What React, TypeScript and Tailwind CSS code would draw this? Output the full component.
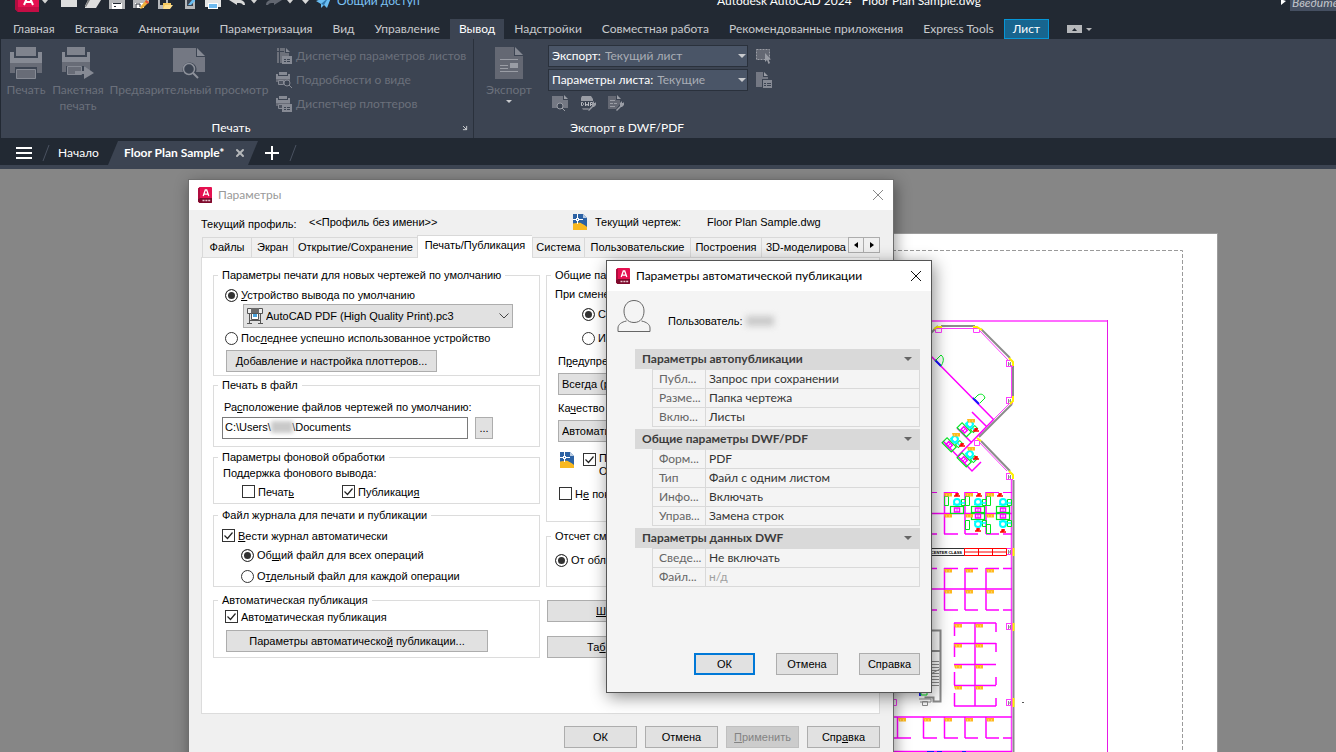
import { useState } from 'react';
import type { ReactNode } from 'react';
import { ArrowDownRight, X } from 'lucide-react';
import clsx from 'clsx';

const ribbonTabs = [
  'Главная', 'Вставка', 'Аннотации', 'Параметризация', 'Вид', 'Управление', 'Вывод', 'Надстройки',
  'Совместная работа', 'Рекомендованные приложения', 'Express Tools',
];

const publishSections = [
  {
    title: 'Параметры автопубликации',
    rows: [
      ['Публ...', 'Запрос при сохранении'],
      ['Разме...', 'Папка чертежа'],
      ['Вклю...', 'Листы'],
    ],
  },
  {
    title: 'Общие параметры DWF/PDF',
    rows: [
      ['Форм...', 'PDF'],
      ['Тип', 'Файл с одним листом'],
      ['Инфо...', 'Включать'],
      ['Управ...', 'Замена строк'],
    ],
  },
  {
    title: 'Параметры данных DWF',
    rows: [
      ['Сведе...', 'Не включать'],
      ['Файл...', 'н/д'],
    ],
  },
];

/* ---------- icons ---------- */

function AcadLogo({ className }: { className?: string }) {
  return (
    <svg viewBox="0 0 14 16" className={className} aria-hidden="true">
      <path d="M0 1.5 2 0h11a1 1 0 0 1 1 1v14a1 1 0 0 1-1 1H1.5L0 14.5z" fill="#e51050" />
      <path d="M0 1.5 2 0v11L0 12z" fill="#b00d3f" />
      <path d="M0 12 2 11h12v4a1 1 0 0 1-1 1H1.5L0 14.5z" fill="#7d0a2c" />
      <path d="M5.2 9 7.3 3h1.4l2.1 6M6 7.2h4" stroke="#fff" strokeWidth="1.3" fill="none" />
      <path d="M4.5 13.5h2M7.4 13.5h2M10.2 13.5h2" stroke="#e8c7d1" strokeWidth="1.4" />
    </svg>
  );
}

function DrawingIcon({ className }: { className?: string }) {
  return (
    <svg viewBox="0 0 14 16" className={className} aria-hidden="true">
      <path d="M0 0h10l4 4v12H0z" fill="#2c62a4" />
      <path d="M10 0v4h4z" fill="#b9cbe2" />
      <path d="M0 9.500c4-.5 6-1 8-.5l6 3.500V16H0z" fill="#f8b820" />
      <path d="M8 9c3 1 5 2.500 6 4V8L7 6z" fill="#2c62a4" />
      <path d="M4.500 0v10M0 5.500h10" stroke="#fff" strokeWidth="1" />
      <rect x="3.500" y="4.500" width="2" height="2" fill="#2c62a4" stroke="#fff" strokeWidth="1" />
    </svg>
  );
}

function PrinterIcon() {
  return (
    <svg viewBox="0 0 32 32" className="size-8" aria-hidden="true">
      <path d="M6 0h20v9H6z" fill="#7f838d" />
      <path d="M0 5h4v6h24V5h4v11H0z" fill="#868a94" />
      <path d="M0 16h32v10h-5v-6H5v6H0z" fill="#686c77" />
      <path d="M6.500 22.500h19v9h-19z" fill="#686c77" stroke="#868a94" />
    </svg>
  );
}

function BatchPrinterIcon() {
  return (
    <svg viewBox="0 0 32 32" className="size-8" aria-hidden="true">
      <path d="M5 0h18v8H5z" fill="#7f838d" />
      <path d="M0 5h3v5h22V5h3v10H0z" fill="#868a94" />
      <path d="M0 15h28v8h-5v-4H4v6H0z" fill="#686c77" />
      <path d="M5.500 19.500h14v8h-14z" fill="#686c77" stroke="#868a94" />
      <path d="M13 24h9v-5l10 7-10 6v-5h-9z" fill="#868a94" />
    </svg>
  );
}

function PreviewIcon() {
  return (
    <svg viewBox="0 0 32 32" className="size-8" aria-hidden="true">
      <path d="M0 1h23v9h9v15h-9a7 7 0 1 0-13 0H0z" fill="#747883" />
      <path d="M24 1v8h8z" fill="#868a94" />
      <circle cx="16" cy="22" r="5.500" fill="none" stroke="#8d919a" strokeWidth="1.500" />
      <path d="m20 26 5 5" stroke="#8d919a" strokeWidth="2" />
    </svg>
  );
}

function ExportIcon() {
  return (
    <svg viewBox="0 0 28 32" className="h-8 w-7" aria-hidden="true">
      <path d="M0 0h19v9h9v23H0z" fill="#646873" />
      <path d="M20 0v8h8z" fill="#868a94" />
      <path d="M5 12.500h18M5 18.500h8M5 24.500h18M5 21.500h8" stroke="#9a9da5" />
      <path d="M15 16h8v5h-8z" fill="#9a9da5" />
    </svg>
  );
}

function PageSetupIcon() {
  return (
    <svg viewBox="0 0 16 16" className="size-4" aria-hidden="true">
      <path d="M1 0h8v5h4v3H6v7H1z" fill="#6d717b" />
      <path d="M10 0v4h4z" fill="#868a94" />
      <path d="M0 3.500h8M3.500 0v15" stroke="#3c4452" />
      <path d="M6 8h10v8H6z" fill="#868a94" />
      <path d="M8 11.500h2M8 13.500h2M11 11.500h3M11 13.500h3" stroke="#3c4452" />
    </svg>
  );
}

function SmallPrinter({ variant }: { variant: 'search' | 'list' }) {
  return (
    <svg viewBox="0 0 16 16" className="size-4" aria-hidden="true">
      <path d="M3 0h8v3H3z" fill="#868a94" />
      <path d="M0 2h2v2h10V2h2v5H0z" fill="#868a94" />
      <path d="M0 7h14v3H0z" fill="#686c77" />
      <path d="M2.500 8.500h5v4h-5z" fill="#4d5360" stroke="#868a94" />
      {variant === 'search' ? (
        <>
          <circle cx="11" cy="11" r="3" fill="#3c4452" stroke="#868a94" />
          <path d="m13 13 3 3" stroke="#868a94" />
        </>
      ) : (
        <>
          <path d="M6 8h10v8H6z" fill="#868a94" />
          <path d="M8 11.500h2M8 13.500h2M11 11.500h3M11 13.500h3" stroke="#3c4452" />
        </>
      )}
    </svg>
  );
}

function SmallPreview() {
  return (
    <svg viewBox="0 0 16 16" className="size-4" aria-hidden="true">
      <path d="M0 1h11v4h5v8H0z" fill="#747883" />
      <path d="M12 0v4h4z" fill="#9a9da5" />
      <circle cx="8" cy="11" r="3" fill="#3c4452" stroke="#9a9da5" />
      <path d="m10 13 3 3" stroke="#9a9da5" />
    </svg>
  );
}

function Wrench() {
  return <path d="m8 15 4-4V8l2-2v2h1l1-1v3l-2 2h-1l-4 4z" fill="#9a9da5" />;
}

function DwfIcon() {
  return (
    <svg viewBox="0 0 16 16" className="size-4" aria-hidden="true">
      <path d="M2 1h9l2 3v2H1V3z" fill="#9a9da5" />
      <path d="M0 6h13v6H0z" fill="#3c4452" />
      <path d="M1.500 7.500v3h1l1-1v-1l-1-1zM5.500 7v4l1.500-2 1.500 2V7M10.500 11V7.500h2M10.500 9.500h1.500" stroke="#b9bbc1" fill="none" />
      <path d="M2 13h7l-1 2H3z" fill="#747883" />
      <Wrench />
    </svg>
  );
}

function PdfOptionsIcon() {
  return (
    <svg viewBox="0 0 16 16" className="size-4" aria-hidden="true">
      <path d="M0 1h8v4h4v4l-4 5H0z" fill="#646873" />
      <path d="M9 0v4h4z" fill="#9a9da5" />
      <path d="M2 5.500h5M2 8.500h3M2 11.500h5M6 8.500h3" stroke="#9a9da5" />
      <Wrench />
    </svg>
  );
}

function PickAreaIcon() {
  return (
    <svg viewBox="0 0 16 16" className="size-4" aria-hidden="true">
      <rect x="0.500" y="1.500" width="13" height="10" fill="#646873" stroke="#9a9da5" strokeDasharray="2 1" />
      <path d="M9 5v9l2-2 1.500 4 1.500-1-1.500-3.500H15z" fill="#9a9da5" />
    </svg>
  );
}

function SheetListIcon() {
  return (
    <svg viewBox="0 0 16 16" className="size-4" aria-hidden="true">
      <path d="M0 0h7v5h5v2H6v8H0z" fill="#747883" />
      <path d="M8 0v4h4z" fill="#9a9da5" />
      <path d="M7 8h9v8H7z" fill="#868a94" />
      <path d="M8 11.500h2M8 13.500h2M11 11.500h4M11 13.500h4" stroke="#3c4452" />
    </svg>
  );
}

function PlotterIcon() {
  return (
    <svg viewBox="0 0 16 16" className="size-4 shrink-0" aria-hidden="true">
      <path d="M.500.500h15v5H.500z" fill="#eee" stroke="#555" />
      <path d="M4 0h8v5H4z" fill="#6b6b6b" />
      <path d="M4.500 5.500h7v6h-7z" fill="#fff" stroke="#555" />
      <path d="M6 6h4v3H6z" fill="#4aa3dc" />
      <path d="M2.500 6v9M13.500 6v9M0 15.500h5M11 15.500h5M3 12.500h10" stroke="#555" fill="none" />
    </svg>
  );
}

function Caret({ className }: { className?: string }) {
  return (
    <svg viewBox="0 0 8 4" className={clsx('h-1 w-2 shrink-0 fill-current', className)} aria-hidden="true">
      <path d="M0 0h8L4 4z" />
    </svg>
  );
}

/* ---------- application chrome ---------- */

function ToolButton({ label, className, children }: { label: string; className: string; children: ReactNode }) {
  return (
    <button aria-label={label} className={clsx('h-3 shrink-0', className)}>
      <svg viewBox="0 0 16 12" className="h-3 w-4" aria-hidden="true">{children}</svg>
    </button>
  );
}

function QuickCaret({ className, label }: { className: string; label: string }) {
  return (
    <button aria-label={label} className={clsx('text-[#d4d4d4]', className)}>
      <svg viewBox="0 0 8 4" className="h-1 w-2 fill-current" aria-hidden="true"><path d="M1 0h6L4 3.500z" /></svg>
    </button>
  );
}

function TitleBar() {
  return (
    <header className="h-[19px] flex items-start overflow-hidden bg-[#222933] pl-[15px] text-white">
      <button aria-label="Меню приложения" className="w-6 h-3">
        <svg viewBox="0 0 24 12" className="h-3 w-6" aria-hidden="true">
          <path d="M0 0h24v12H3l-3-3z" fill="#e51050" />
          <path d="M0 0h3v12L0 9z" fill="#b00d3f" />
          <path d="M3 7h21v5H3z" fill="#c40d45" />
          <path d="m9 5 3-7h3l3 7M11 2h5" stroke="#fff" strokeWidth="2" fill="none" />
        </svg>
      </button>
      <QuickCaret label="Меню" className="ml-[2px]" />
      <ToolButton label="Создать" className="ml-3">
        <path d="M0 0h16v7H0z" fill="#dedede" />
      </ToolButton>
      <ToolButton label="Открыть" className="ml-2">
        <path d="M3 0h13l-5 8H0V6z" fill="#dedede" />
        <path d="M3 0h2L1 7H0z" fill="#777" />
      </ToolButton>
      <ToolButton label="Сохранить" className="ml-2">
        <path d="M0 0h16v9H0z" fill="#b5b7ba" />
        <path d="M3 3h10v6H3z" fill="#fff" />
        <path d="M4 3.500h8M5 6.500h2" stroke="#222933" />
      </ToolButton>
      <ToolButton label="Сохранить как" className="ml-2">
        <path d="M0 0h16v3H3v5H0z" fill="#b5b7ba" />
        <path d="M2 3h9v5H2z" fill="#fff" />
        <path d="M3 8V4h4v3" stroke="#222933" fill="none" />
        <path d="m7 9 1-3 5-6 3 2-6 6z" fill="#f0b13b" />
        <path d="m13 0 3 2-1 2-3-2z" fill="#e5533d" />
      </ToolButton>
      <ToolButton label="Открыть с веб-устройств" className="ml-2">
        <path d="M1 0h10v9H1z" fill="#b5b7ba" />
        <path d="M3 0h6v5H3z" fill="#222933" />
        <path d="M6 3h8v5H6z" fill="#f6c85c" />
        <path d="m8 5h8l-3 4H6z" fill="#ffdf8e" />
      </ToolButton>
      <ToolButton label="Сохранить на веб-устройствах" className="ml-3">
        <path d="M0 0h10v9H0z" fill="#b5b7ba" />
        <path d="M2 0h6v6H2z" fill="#3c4452" />
        <path d="m3 5 4-5h3v1L6 5z" fill="#69bdf2" />
      </ToolButton>
      <ToolButton label="Печать" className="ml-1">
        <path d="M0 0h16v7H0z" fill="#e5e5e5" />
        <path d="M3 3h10v6H3z" fill="#fff" />
        <path d="M4 4h8v4H4z" fill="#6db9ef" />
      </ToolButton>
      <ToolButton label="Отменить" className="ml-2">
        <path d="M0 0h10c4 0 6 2 6 5h-2c-1-2-3-2-6-2v2z" fill="#d9d9d9" />
      </ToolButton>
      <QuickCaret label="История отмены" className="ml-[5px]" />
      <ToolButton label="Повторить" className="ml-2">
        <path d="M16 0H6C2 0 0 2 0 5h2c1-2 3-2 6-2v2z" fill="#616670" />
      </ToolButton>
      <QuickCaret label="История повтора" className="ml-1" />
      <ToolButton label="Настройка панели" className="ml-2 w-[10px]">
        <path d="M0 0h7L3.500 4z" fill="#d9d9d9" />
      </ToolButton>
      <button className="ml-1 -mt-[7px] flex items-center gap-[5px] text-xs leading-4 text-[#7cc3f5]">
        <svg viewBox="0 0 16 16" className="size-4" aria-hidden="true">
          <path d="M0 8 16 2l-5 13-3-3-3 3v-4z" fill="#69bdf2" />
          <path d="m5 11 7-6-4 7z" fill="#2c75ad" />
        </svg>
        Общий доступ
      </button>
      <h1 className="ml-auto -mt-[7px] mr-[300px] flex gap-[10px] text-xs leading-4">
        <span>Autodesk AutoCAD 2024</span>
        <span>Floor Plan Sample.dwg</span>
      </h1>
      <svg viewBox="0 0 5 6" className="h-1.5 w-[5px] mr-1 fill-white" aria-hidden="true"><path d="M0 0h2l3 1-5 4z" /></svg>
      <input
        aria-label="Поиск"
        placeholder="Введите"
        className="-mt-[7px] h-[18px] w-[46px] bg-[#454f61] pl-0.5 text-xs italic outline-none placeholder:text-[#c3c6cb]"
      />
    </header>
  );
}

function RibbonTabs() {
  const [active, setActive] = useState('Вывод');
  return (
    <nav className="h-5 flex items-stretch bg-[#222933] pl-[3px] text-xs text-[#c8cacd]" aria-label="Вкладки ленты">
      {ribbonTabs.map(tab => (
        <button
          key={tab}
          onClick={() => setActive(tab)}
          className={clsx('whitespace-nowrap', active === tab ? 'px-[9px] bg-[#3c4452] text-white' : 'px-[10px]')}
        >
          {tab}
        </button>
      ))}
      <button className="px-2 border border-[#0696d7] bg-[#17658f] text-white">Лист</button>
      <button aria-label="Свернуть ленту" className="ml-[18px] flex items-center gap-1 text-[#b5b7ba]">
        <svg viewBox="0 0 15 8" className="h-2 w-[15px]" aria-hidden="true">
          <path d="M0 0h15v8H0z" fill="#b5b7ba" />
          <path d="M5 6h5L7.500 3z" fill="#222933" />
        </svg>
        <Caret className="h-[3px] w-[6px]" />
      </button>
    </nav>
  );
}

function BigButton({ icon, label, className }: { icon: ReactNode; label: ReactNode; className?: string }) {
  return (
    <button disabled className={clsx('flex flex-col items-center gap-[3px] self-start leading-4', className)}>
      {icon}
      <span>{label}</span>
    </button>
  );
}

function ExportSelect({ label, value }: { label: string; value: string }) {
  return (
    <label className="flex h-[22px] w-[200px] items-center gap-1 border border-[#2a313c] bg-[#4a5567] pl-[3px] pr-px text-white">
      <span className="whitespace-nowrap">{label}</span>
      <select className="min-w-0 flex-1 appearance-none text-[#a9adb5] outline-none">
        <option>{value}</option>
      </select>
      <Caret className="text-[#c8cacd]" />
    </label>
  );
}

function Ribbon() {
  return (
    <div className="h-[99px] flex bg-[#3c4452] border-l border-[#222933] text-xs text-[#6b707b]">
      <section className="flex w-[473px] flex-col border-r border-[#2a313c]">
        <div className="flex flex-1 items-start pt-2">
          <BigButton icon={<PrinterIcon />} label="Печать" className="w-[50px]" />
          <BigButton icon={<BatchPrinterIcon />} label={<>Пакетная<br />печать</>} className="w-[54px]" />
          <BigButton icon={<PreviewIcon />} label="Предварительный просмотр" className="w-[168px] whitespace-nowrap" />
          <div className="flex flex-col gap-2 pl-[3px] pt-px leading-4">
            <button disabled className="flex items-center gap-1"><PageSetupIcon />Диспетчер параметров листов</button>
            <button disabled className="flex items-center gap-1"><SmallPrinter variant="search" />Подробности о виде</button>
            <button disabled className="flex items-center gap-1"><SmallPrinter variant="list" />Диспетчер плоттеров</button>
          </div>
        </div>
        <div className="flex h-5 items-center pr-1 text-white">
          <span className="flex-1 text-center">Печать</span>
          <button aria-label="Параметры печати" className="text-[#c8cacd]"><ArrowDownRight className="size-2" strokeWidth={3} /></button>
        </div>
      </section>
      <section className="flex flex-col">
        <div className="flex flex-1 gap-3 pt-1.5 px-2">
          <div className="flex flex-col items-center pt-0.5">
            <BigButton icon={<ExportIcon />} label="Экспорт" className="w-[54px]" />
            <Caret className="mt-[2px] h-[3px] w-[6px] text-[#c8cacd]" />
          </div>
          <div className="flex flex-col gap-0.5">
            <ExportSelect label="Экспорт:" value="Текущий лист" />
            <ExportSelect label="Параметры листа:" value="Текущие" />
            <div className="flex gap-3 pl-1 pt-[2px]">
              <button disabled aria-label="Просмотр"><SmallPreview /></button>
              <button disabled aria-label="Параметры экспорта в DWF"><DwfIcon /></button>
              <button disabled aria-label="Параметры экспорта в PDF"><PdfOptionsIcon /></button>
            </div>
          </div>
          <div className="-ml-1 flex flex-col gap-2 pt-[3px]">
            <button disabled aria-label="Выбрать область"><PickAreaIcon /></button>
            <button disabled aria-label="Параметры листа"><SheetListIcon /></button>
          </div>
        </div>
        <div className="h-5 leading-5 text-center text-white">Экспорт в DWF/PDF</div>
      </section>
    </div>
  );
}

function DocumentTabs() {
  return (
    <div className="h-[31px] flex items-end border-b-4 border-[#3c4452] bg-[#222933] text-xs text-white">
      <div className="flex h-6 items-center">
        <button aria-label="Меню файлов" className="ml-4">
          <svg viewBox="0 0 16 12" className="h-3 w-4" stroke="#fff" strokeWidth="2" aria-hidden="true">
            <path d="M0 1h16M0 6h16M0 11h16" />
          </svg>
        </button>
        <svg viewBox="0 0 8 16" className="ml-[10px] h-4 w-2" stroke="#4a5260" aria-hidden="true"><path d="M7 0 1 16" /></svg>
        <button className="ml-2 w-[50px] text-left">Начало</button>
      </div>
      <svg viewBox="0 0 10 24" className="h-6 w-[10px]" aria-hidden="true"><path d="M10 0v24H0z" fill="#3c4452" /></svg>
      <div className="flex h-6 items-center gap-[10px] bg-[#3c4452] pl-1.5">
        <button className="font-bold whitespace-nowrap">Floor Plan Sample*</button>
        <button aria-label="Закрыть вкладку"><X className="size-3 text-[#b5b7ba]" strokeWidth={4} /></button>
      </div>
      <svg viewBox="0 0 12 24" className="h-6 w-3" aria-hidden="true"><path d="M0 0h12L2 24H0z" fill="#3c4452" /></svg>
      <div className="flex h-6 items-center">
        <button aria-label="Новая вкладка" className="ml-[7px]">
          <svg viewBox="0 0 14 14" className="size-[14px]" stroke="#fff" strokeWidth="2" aria-hidden="true"><path d="M7 0v14M0 7h14" /></svg>
        </button>
        <svg viewBox="0 0 8 16" className="ml-[10px] h-4 w-2" stroke="#4a5260" aria-hidden="true"><path d="M7 0 1 16" /></svg>
      </div>
    </div>
  );
}

/* ---------- floor plan ---------- */

function Desk({ x, y, turn = 0, flip = false }: { x: number; y: number; turn?: number; flip?: boolean }) {
  return (
    <g transform={`translate(${x} ${y}) rotate(${turn}) scale(1 ${flip ? -1 : 1})`} fill="none">
      <rect x="-6.500" y="0.500" width="13" height="7" stroke="#00e61e" strokeWidth="1.200" />
      <path d="M4.500 -6.500h4v6h-4z" stroke="#00e61e" />
      <circle cx="0" cy="-4" r="3" stroke="#00ffff" strokeWidth="2" />
      <path d="M4 -3h4M-4 -1.500h8" stroke="#00ffff" strokeWidth="1.500" />
      <rect x="-2.500" y="2" width="5" height="4" stroke="#ff00ff" strokeWidth="1.500" />
      <path d="M0 2v4" stroke="#ff00ff" />
    </g>
  );
}

function Tag({ x, y }: { x: number; y: number }) {
  return (
    <g transform={`translate(${x} ${y})`}>
      <path d="M0 0h8v3.500H1z" fill="#ffb91e" />
      <path d="M2 2h1M5 2h1" stroke="#ffe08c" />
    </g>
  );
}

const officeColumns = [944, 965, 986];
const pillars: [number, number][] = [[1006, 360], [1006, 397], [1006, 473], [1006, 548], [1006, 623], [1006, 699]];
const phones: [number, number][] = [[973, 429], [959, 444], [973, 457], [954, 494], [976, 494], [997, 494], [975, 529], [1000, 530]];

function FloorPlan() {
  return (
    <svg viewBox="880 233 340 519" className="absolute left-[880px] top-16 h-[519px] w-[340px]" role="img" aria-label="План этажа">
      <path d="M880 233h338v519H880z" fill="#9c9c9c" />
      <path d="M880 234h337v518H880z" fill="#fff" />
      <path d="M880 250.500h302.500V752" fill="none" stroke="#9a9a9a" strokeDasharray="4 2" />
      <path d="M880 321h228" stroke="#ff6bff" strokeWidth="2" />
      <path d="M1107.500 320v432" stroke="#e619e6" />

      {/* outer walls */}
      <g fill="none" stroke="#8c8c8c" strokeWidth="2">
        <path d="M930 334l8-8M941 326h34M981 329l29 29M1013 365v32M1012 404l-33 33M981 441l29 30" />
        <path d="M1013.500 480v272" />
      </g>
      <g fill="none" stroke="#ff3cff">
        <path d="M941 328.500h33M980 331l28 29M1011.500 365v33M1009 404l-32 32M979 442l28 29" />
        <path d="M1011.500 480v272" strokeWidth="1.500" />
      </g>
      <g fill="none" stroke="#ff3cff">
        {pillars.map(([x, y]) => (
          <g key={y}>
            <rect x={x + 0.5} y={y + 0.5} width="6" height="6" />
            <path d={`M${x + 2.5} ${y + 2}v4m0-2h2m0-2v4`} stroke="#8c8c8c" />
          </g>
        ))}
        <path d="M935.500 328.500h6v4h-6zM973.500 328.500h6v4h-6zM974.500 440.500h5v5h-5zM890.500 699.500h6v6h-6z" />
      </g>
      <g fill="none" stroke="#fff200" strokeWidth="2">
        <path d="M934 329l3-2h5M973 327h4l5 3M1009 358l4 4v4M1013 396v5l-3 3M977 438l4 3M1009 471l4 4v4M1013.500 548v8M1013.500 623v8M1013.500 698v9" />
      </g>

      {/* diagonal meeting rooms */}
      <path d="M928 353 994 420M994 419l-37 38M972 412l15 15M957 428l15 15M943 441l29 30 9-9" fill="none" stroke="#ff00ff" strokeWidth="1.500" />
      <path d="m935 360 6 6M973 398l6 6" stroke="#1414ff" strokeWidth="2" />
      <path d="m935 361 6-6c4 3 2 8 0 11M974 399l4-4c4-2 6 0 7 3l-5 5" fill="none" stroke="#00e61e" />
      <Desk x={967} y={427} turn={45} />
      <Desk x={952} y={442} turn={45} />
      <Desk x={967} y={457} turn={45} />
      <Tag x={967} y={419} />
      <Tag x={952} y={433} />
      <Tag x={967} y={447} />

      {/* furnished offices */}
      <g fill="none" stroke="#ff00ff">
        <path d="M925 492.500h12M944 492.500h14M965 492.500h13M986 492.500h13M1003 492.500h9" />
        <path d="M925 534h12M944 534h14M965 534h13M986 534h13M1003 534h9" strokeWidth="1.500" />
        <path d="M925 513.500h87M944.500 492v42M965 492v42M986 492v42" strokeWidth="1.500" />
      </g>
      <g fill="none" stroke="#00e61e">
        <path d="M944.500 496.500h4v9h-4zM965.500 496.500h4v9h-4zM986.500 496.500h4v9h-4zM965.500 520.500h4v9h-4zM986.500 524.500h4v9h-4z" />
      </g>
      <Desk x={957} y={506} />
      <Desk x={978} y={506} />
      <Desk x={1003} y={506} />
      <Desk x={978} y={520} flip />
      <Desk x={1003} y={520} flip />
      {officeColumns.map(x => <Tag key={x} x={x} y={493} />)}
      {officeColumns.map(x => <Tag key={x} x={x} y={514} />)}
      {phones.map(([x, y]) => (
        <path key={`${x}-${y}`} d={`M${x} ${y + 2}h2v-2h3m-3 2h4m-3 0v-3`} fill="none" stroke="#ff0000" strokeWidth="1.500" />
      ))}

      {/* title strip */}
      <path d="M925 548.500h39.500v7H925" fill="#fff" stroke="#333" />
      <text x="962" y="554" fontSize="4" fontWeight="bold" textAnchor="end" fontFamily="Liberation Sans, sans-serif">CENTER CLASS</text>
      <path d="M964.500 548.500h42v7h-42zM964 552h43M978.500 548v8M992.500 548v8" fill="none" stroke="#ff0000" />

      {/* empty offices */}
      <g fill="none" stroke="#ff00ff" strokeWidth="1.500">
        <path d="M925 568.500h12M944 568.500h14M965 568.500h13M986 568.500h13M1003 568.500h9M925 589h87" />
        <path d="M925 610h12M944 610h14M965 610h13M986 610h13M1003 610h9M944.500 568v42M965 568v42M986 568v42" />
      </g>
      {officeColumns.map(x => <Tag key={x} x={x} y={569} />)}
      {officeColumns.map(x => <Tag key={x} x={x} y={590} />)}

      {/* inner cubicles */}
      <g fill="none" stroke="#ff00ff" strokeWidth="1.500">
        <path d="M954 623h42M954 643.500h42M954 664.500h42M954 685.500h42M954 706h42M975 623v83" />
        <path d="M954.500 623v13M954.500 643v14M954.500 672v13M954.500 693v13M996 623v9M996 643v9M996 677v8M996 698v8" />
      </g>
      {[624, 644, 665, 686].map(y => (
        <g key={y}>
          <Tag x={954} y={y} />
          <Tag x={975} y={y} />
        </g>
      ))}

      {/* staircase */}
      <g fill="none" stroke="#8c8c8c">
        <path d="M925 630.500h15.500v71h-7v-4h-9M925 651h15" strokeWidth="2" />
        <path d="M925 661.500h14M925 664.500h14M925 667.500h14M925 670.500h14M925 673.500h14M925 676.500h14M925 679.500h14M925 682.500h14M925 685.500h14M925 677l15-8M919 699h12v3h-11M922.500 701.500h5v4h-5z" />
      </g>
      <path d="M920 688v8" stroke="#1414ff" strokeWidth="2" />
      <path d="M921 690v5h6v-3" fill="none" stroke="#00e61e" />

      {/* bottom row */}
      <g fill="none" stroke="#ff00ff" strokeWidth="1.500">
        <path d="M885 717h127M897.500 717v21M923.500 717v21M944.500 717v21M965 717v21M986 717v21" />
        <path d="M885 738h26M923 738h14M944 738h14M965 738h13M986 738h13M1003 738h9M885 751.500h127" />
      </g>
      {[898, 923, 944, 965, 986].map(x => <Tag key={x} x={x} y={718} />)}
      <path d="M927 751.500h7M937 751.500h5M962 751.500h4" stroke="#1414ff" />
      <path d="M1022 702.500h2" stroke="#555" />
    </svg>
  );
}

/* ---------- dialog controls ---------- */

// "&" marks the access key, as in Win32 resource strings
function Mnemonic({ text }: { text: string }) {
  const at = text.indexOf('&');
  if (at < 0) return <>{text}</>;
  return <>{text.slice(0, at)}<u className="underline-offset-1">{text[at + 1]}</u>{text.slice(at + 2)}</>;
}

function Radio({ label, name, checked, className }: { label: string; name: string; checked?: boolean; className?: string }) {
  return (
    <label className={clsx('flex h-4 items-center gap-[3px] whitespace-nowrap', className)}>
      <input
        type="radio"
        name={name}
        defaultChecked={checked}
        className="size-[13px] shrink-0 appearance-none rounded-full border border-[#333] bg-white checked:bg-[#333] checked:shadow-[inset_0_0_0_2px_white]"
      />
      <span><Mnemonic text={label} /></span>
    </label>
  );
}

function Check({ label, checked, className }: { label: ReactNode; checked?: boolean; className?: string }) {
  return (
    <label className={clsx('flex items-start gap-[3px] whitespace-nowrap', className)}>
      <span className="relative mt-px size-[13px] shrink-0">
        <input type="checkbox" defaultChecked={checked} className="peer block size-[13px] appearance-none border border-[#333] bg-white" />
        <svg viewBox="0 0 13 13" className="pointer-events-none absolute inset-0 hidden peer-checked:block" aria-hidden="true">
          <path d="m2.500 6.500 3 3 5-6" fill="none" stroke="#222" strokeWidth="1.200" />
        </svg>
      </span>
      <span>{typeof label === 'string' ? <Mnemonic text={label} /> : label}</span>
    </label>
  );
}

function PushButton({ text, className, disabled }: { text: string; className?: string; disabled?: boolean }) {
  return (
    <button
      disabled={disabled}
      className={clsx(
        'block h-[22px] border whitespace-nowrap',
        disabled ? 'border-[#bfbfbf] bg-[#ccc] text-[#838383]' : 'border-[#adadad] bg-[#e1e1e1]',
        className,
      )}
    >
      <Mnemonic text={text} />
    </button>
  );
}

function Group({ title, className, children }: { title: string; className?: string; children: ReactNode }) {
  return (
    <fieldset className={clsx('min-w-0 border border-[#dcdcdc] pl-2', className)}>
      <legend className="-ml-1 px-1 leading-4 whitespace-nowrap">{title}</legend>
      {children}
    </fieldset>
  );
}

function ComboBox({ label, value, icon, className }: { label: string; value: string; icon?: ReactNode; className?: string }) {
  return (
    <div className={clsx('flex items-center border border-[#adadad] bg-[#e1e1e1]', className)}>
      {icon}
      <select aria-label={label} className="min-w-0 flex-1 appearance-none bg-transparent outline-none">
        <option>{value}</option>
      </select>
      <svg viewBox="0 0 10 6" className="mr-[3px] h-1.5 w-[10px]" fill="none" stroke="#444" aria-hidden="true"><path d="m.500.500 4.500 4.500L9.500.500" /></svg>
    </div>
  );
}

const optionTabs = ['Файлы', 'Экран', 'Открытие/Сохранение', 'Печать/Публикация', 'Система', 'Пользовательские', 'Построения', '3D-моделирова'];
const optionTabWidths = ['w-[49px]', 'w-[42px]', 'w-[124px]', 'w-[115px]', 'w-[52px]', 'w-[106px]', 'w-[71px]', 'flex-1'];

function OptionsDialog() {
  return (
    <div
      role="dialog"
      aria-label="Параметры"
      className="absolute left-[188px] top-[10px] w-[706px] border border-[#6e6e6e] bg-[#f0f0f0] font-['Liberation_Sans',sans-serif] text-[11px] leading-4 text-black shadow-[2px_4px_14px_rgba(0,0,0,0.4)]"
    >
      <div className="flex h-[30px] items-center bg-white pl-[9px] pr-[9px] font-[Lato,sans-serif] text-xs text-[#999]">
        <AcadLogo className="h-4 w-[14px]" />
        <h2 className="ml-1.5 flex-1">Параметры</h2>
        <button aria-label="Закрыть" className="text-[#888]">
          <svg viewBox="0 0 12 12" className="size-3" stroke="currentColor" aria-hidden="true"><path d="m1 1 10 10M11 1 1 11" /></svg>
        </button>
      </div>

      <div className="flex h-6 items-center pl-3">
        <span className="w-[108px] pt-1">Текущий профиль:</span>
        <span className="w-[264px]">&lt;&lt;Профиль без имени&gt;&gt;</span>
        <DrawingIcon className="mr-2 h-4 w-[14px]" />
        <span className="w-28">Текущий чертеж:</span>
        <span>Floor Plan Sample.dwg</span>
      </div>

      <div className="pl-3 pr-[13px]">
        <div className="flex h-[23px] items-end pl-px" role="tablist">
          {optionTabs.map((tab, i) => (
            <button
              key={tab}
              role="tab"
              aria-selected={i === 3}
              className={clsx(
                'shrink-0 overflow-hidden whitespace-nowrap border-t border-l border-[#d9d9d9]',
                optionTabWidths[i],
                i === 3 ? 'relative -mb-px h-[23px] bg-white pb-1' : 'h-5 pb-px',
                i === 7 && 'min-w-0 pl-1 text-left',
              )}
            >
              {tab}
            </button>
          ))}
          <button aria-label="Вкладки влево" className="mb-1 flex h-4 w-4 items-center justify-center border border-[#adadad]">
            <svg viewBox="0 0 4 6" className="h-1.5 w-1" aria-hidden="true"><path d="M4 0v6L0 3z" /></svg>
          </button>
          <button aria-label="Вкладки вправо" className="mb-1 flex h-4 w-4 items-center justify-center border border-l-0 border-[#adadad]">
            <svg viewBox="0 0 4 6" className="h-1.5 w-1" aria-hidden="true"><path d="M0 0v6l4-3z" /></svg>
          </button>
        </div>

        <div className="flex h-[457px] items-start gap-1.5 border border-[#dcdcdc] bg-white pl-[11px] pt-[9px]">
          <div className="w-[327px] shrink-0">
            <Group title="Параметры печати для новых чертежей по умолчанию" className="pb-[3px]">
              <Radio name="device" checked label="&Устройство вывода по умолчанию" className="mt-1 ml-[3px]" />
              <ComboBox
                label="Устройство вывода"
                value="AutoCAD PDF (High Quality Print).pc3"
                icon={<span className="mx-[3px]"><PlotterIcon /></span>}
                className="ml-[21px] mt-px h-6 w-[270px]"
              />
              <Radio name="device" label="Пос&леднее успешно использованное устройство" className="mt-0.5 ml-[3px]" />
              <PushButton text="&Добавление и настройка плоттеров..." className="ml-1 mt-1 w-[211px]" />
            </Group>
            <Group title="Печать в файл" className="mt-px pb-[7px]">
              <label htmlFor="plot-folder" className="mt-1.5 ml-[2px] block">Ра<u>с</u>положение файлов чертежей по умолчанию:</label>
              <div className="mt-0.5 flex gap-[7px]">
                <div className="relative">
                  <input
                    id="plot-folder"
                    defaultValue={'C:\\Users\\\u00a0\u00a0\u00a0\u00a0\u00a0\u00a0\u00a0\\Documents'}
                    className="h-[22px] w-[246px] border border-[#7a7a7a] bg-white px-0.5 pb-0.5 outline-none"
                  />
                  <span className="absolute left-[49px] top-1 h-3 w-[22px] bg-[#c9c9c9] blur-[2px]" />
                </div>
                <PushButton text="..." className="w-[18px]" />
              </div>
            </Group>
            <Group title="Параметры фоновой обработки" className="mt-0.5 pb-[3px]">
              <span className="ml-px block">Поддержка фонового вывода:</span>
              <div className="mt-[3px] flex pl-5">
                <Check label="Печат&ь" className="w-[100px]" />
                <Check label="Публикаци&я" checked />
              </div>
            </Group>
            <Group title="Файл журнала для печати и публикации" className="mt-[3px] pb-[2px]">
              <Check label="&Вести журнал автоматически" checked className="mt-[5px]" />
              <Radio name="journal" checked label="Об&щий файл для всех операций" className="mt-[3px] ml-[19px]" />
              <Radio name="journal" label="О&тдельный файл для каждой операции" className="mt-[5px] ml-[19px]" />
            </Group>
            <Group title="Автоматическая публикация" className="mt-[5px] pb-[5px]">
              <Check label="Авто&матическая публикация" checked className="ml-[3px] mt-px" />
              <PushButton text="Параметры автоматическо&й публикации..." className="ml-1 mt-[5px] w-[262px]" />
            </Group>
          </div>

          <div className="min-w-0 flex-1 pr-[5px]">
            <Group title="Общие пар" className="pb-[19px]">
              <span className="mt-[3px] block">При смене</span>
              <Radio name="layout" checked label="Со" className="mt-1 ml-[27px]" />
              <Radio name="layout" label="Ис" className="mt-2 ml-[27px]" />
              <label htmlFor="spool-alert" className="mt-[7px] ml-[3px] block">П<u>р</u>едупре</label>
              <ComboBox label="Предупреждения" value="Всегда (р" className="ml-[3px] mt-1 h-[22px] w-[270px] pl-[3px]" />
              <label className="mt-[5px] ml-[3px] block">Ка<u>ч</u>ество</label>
              <ComboBox label="Качество" value="Автомати" className="ml-[3px] mt-1 h-[22px] w-[270px] pl-[3px]" />
              <div className="mt-[10px] ml-[5px] flex gap-[9px]">
                <DrawingIcon className="h-4 w-[14px]" />
                <Check checked label={<>П<br />О</>} className="leading-[13px]" />
              </div>
              <Check label="Н&е пок" className="mt-2 ml-1" />
            </Group>
            <Group title="Отсчет см" className="mt-1.5 pb-[18px]">
              <Radio name="offset" checked label="От обла" className="mt-2" />
            </Group>
            <PushButton text="&Шт" className="mt-[13px] ml-px w-[210px] pl-12 text-left" />
            <PushButton text="Та&б" className="mt-[14px] ml-px w-[210px] pl-[39px] text-left" />
          </div>
        </div>

        <div className="flex h-12 justify-end gap-2 pt-3">
          <PushButton text="ОК" className="w-[73px]" />
          <PushButton text="Отмена" className="w-[73px]" />
          <PushButton text="&Применить" disabled className="w-[73px]" />
          <PushButton text="Спр&авка" className="w-[73px]" />
        </div>
      </div>
    </div>
  );
}

function PublishDialog() {
  return (
    <div
      role="dialog"
      aria-label="Параметры автоматической публикации"
      className="absolute left-[606px] top-[91px] w-[326px] border border-[#555] bg-[#f4f4f4] font-[Lato,sans-serif] text-xs leading-4 shadow-[2px_4px_16px_rgba(0,0,0,0.45)]"
    >
      <div className="flex h-[30px] items-center bg-white pl-[9px] pr-[9px] text-black">
        <AcadLogo className="h-4 w-[14px]" />
        <h2 className="ml-1.5 flex-1">Параметры автоматической публикации</h2>
        <button aria-label="Закрыть">
          <svg viewBox="0 0 12 12" className="size-3" stroke="#111" aria-hidden="true"><path d="m1 1 10 10M11 1 1 11" /></svg>
        </button>
      </div>

      <div className="flex items-center pl-[10px] pt-[9px]">
        <svg viewBox="0 0 34 34" className="size-[34px]" fill="none" stroke="#666" aria-hidden="true">
          <path d="M17 .500c-6 0-10 4.500-10 10.500s3 11.500 10 11.500S27 17 27 11 23 .500 17 .500zM9.500 21C4.500 22 1 24.500 1 28v3.500h32V28c0-3.500-3.500-6-8.500-7" />
        </svg>
        <span className="ml-[17px] pt-2 font-['Liberation_Sans',sans-serif] text-[11px] text-black">Пользователь:</span>
        <span className="ml-1 mt-2 h-[10px] w-7 bg-[#c9c9c9] blur-[3px]" aria-hidden="true" />
      </div>

      <div className="flex flex-col gap-0.5 pl-7 pr-[11px] pt-[15px]">
        {publishSections.map(section => (
          <section key={section.title}>
            <button className="flex h-5 w-full items-center bg-[#d9d9d9] pl-[7px] pr-[8px] text-[#3c3c3c]">
              <span className="flex-1 text-left font-bold">{section.title}</span>
              <Caret className="text-[#666]" />
            </button>
            <table className="ml-[17px] w-[268px] table-fixed border-collapse">
              <tbody>
                {section.rows.map(([name, value]) => (
                  <tr key={name} className="h-[19px]">
                    <th scope="row" className="w-[53px] border border-[#d9d9d9] p-0 pl-[6px] text-left font-normal text-[#666]">{name}</th>
                    <td className={clsx('border border-[#d9d9d9] p-0 pl-[3px]', value === 'н/д' ? 'text-[#a0a0a0]' : 'text-[#333]')}>{value}</td>
                  </tr>
                ))}
              </tbody>
            </table>
          </section>
        ))}
      </div>

      <div className="flex justify-end gap-[21px] pb-[17px] pl-[87px] pr-[11px] pt-[66px] font-['Liberation_Sans',sans-serif] text-[11px] text-black">
        <button className="h-[22px] w-[61px] border-2 border-[#0078d7] bg-[#e1e1e1]">ОК</button>
        <PushButton text="Отмена" className="w-[62px]" />
        <PushButton text="Справка" className="w-[61px]" />
      </div>
    </div>
  );
}

export default function App() {
  return (
    <div className="flex h-screen flex-col overflow-hidden bg-[#222933] font-[Lato,'Noto_Sans',sans-serif]">
      <TitleBar />
      <RibbonTabs />
      <Ribbon />
      <DocumentTabs />
      <main className="relative flex-1 overflow-hidden bg-[#868686]">
        <FloorPlan />
        <OptionsDialog />
        <PublishDialog />
      </main>
    </div>
  );
}
